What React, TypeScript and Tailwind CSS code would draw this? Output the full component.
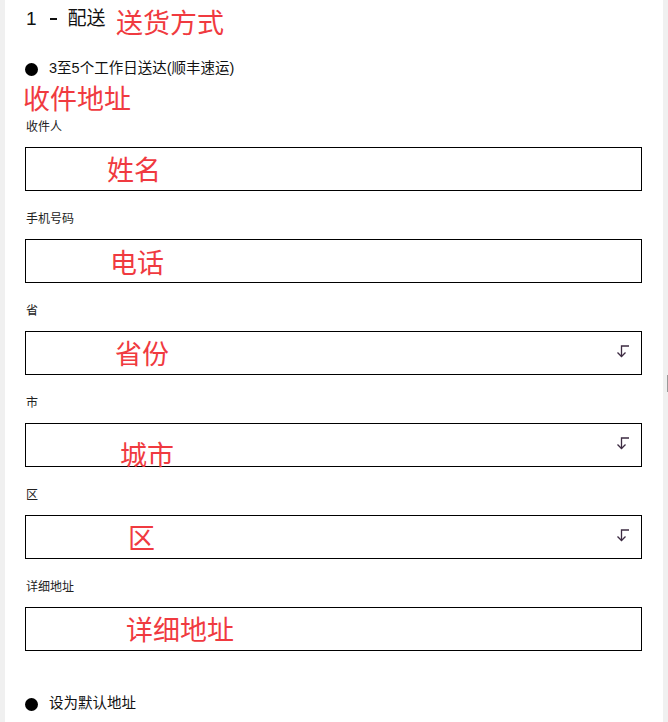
import React from "react";

const font = { fontFamily: '"Liberation Sans", "Noto Sans CJK SC", sans-serif' };

type Field = {
  label: string;
  note: string;
  noteClass: string;
  select?: boolean;
};

const fields: Field[] = [
  { label: "收件人", note: "姓名", noteClass: "left-[81px] top-[8px]" },
  { label: "手机号码", note: "电话", noteClass: "left-[84px] top-[9px]" },
  { label: "省", note: "省份", noteClass: "left-[89px] top-[8px]", select: true },
  { label: "市", note: "城市", noteClass: "left-[94px] top-[17px]", select: true },
  { label: "区", note: "区", noteClass: "left-[102px] top-[8px]", select: true },
  { label: "详细地址", note: "详细地址", noteClass: "left-[100px] top-[8px]" },
];

function ArrowIcon() {
  return (
    <svg width="14" height="13" viewBox="0 0 14 13" fill="none" className="absolute right-[11px] top-[13px]">
      <path d="M13 1H5.5V11.5" stroke="#3d2b42" strokeWidth="1.3" />
      <path d="M1.5 7.5L5.5 11.5L9.5 7.5" stroke="#3d2b42" strokeWidth="1.3" />
    </svg>
  );
}

function Bullet({ text }: { text: string }) {
  return (
    <div className="flex items-center h-[22px]">
      <span className="w-[13px] h-[13px] rounded-full bg-black" />
      <span className="ml-[11px] text-[14.5px] text-[#111]">{text}</span>
    </div>
  );
}

export default function App() {
  return (
    <div className="w-[668px] h-[722px] bg-[#f0f0f0] overflow-hidden relative" style={font}>
      <div className="ml-[5px] w-[658px] h-[722px] bg-white pl-[20px] pr-[21px]">
        <div className="relative h-[50px] pt-[7px]">
          <div className="flex items-center h-[24px] pl-px text-[19px] text-[#111]">
            <span>1</span>
            <span className="ml-[13px] w-[7px] h-[2.5px] bg-[#111]" />
            <span className="ml-[11px]">配送</span>
          </div>
          <span className="absolute left-[91px] top-[9px] text-[27px] leading-[30px] text-[#f03a40]">送货方式</span>
        </div>
        <div className="mt-[8px]">
          <Bullet text="3至5个工作日送达(顺丰速运)" />
        </div>
        <div className="text-[27px] leading-[30px] text-[#f03a40] -ml-[2px] mt-[5px] h-[35px]">收件地址</div>
        <div className="flex flex-col gap-[20px] -mt-px">
          {fields.map((f) => (
            <div key={f.label} className="flex flex-col gap-[12px]">
              <div className="pl-px text-[12px] leading-[16px] text-[#222]">{f.label}</div>
              <div className="relative h-[44px] border border-black">
                <span className={`absolute text-[27px] leading-[30px] text-[#f03a40] ${f.noteClass}`}>{f.note}</span>
                {f.select && <ArrowIcon />}
              </div>
            </div>
          ))}
        </div>
        <div className="mt-[42px]">
          <Bullet text="设为默认地址" />
        </div>
      </div>
      <div className="absolute right-0 top-[375px] w-px h-[17px] bg-[#9a9a9a]" />
    </div>
  );
}
